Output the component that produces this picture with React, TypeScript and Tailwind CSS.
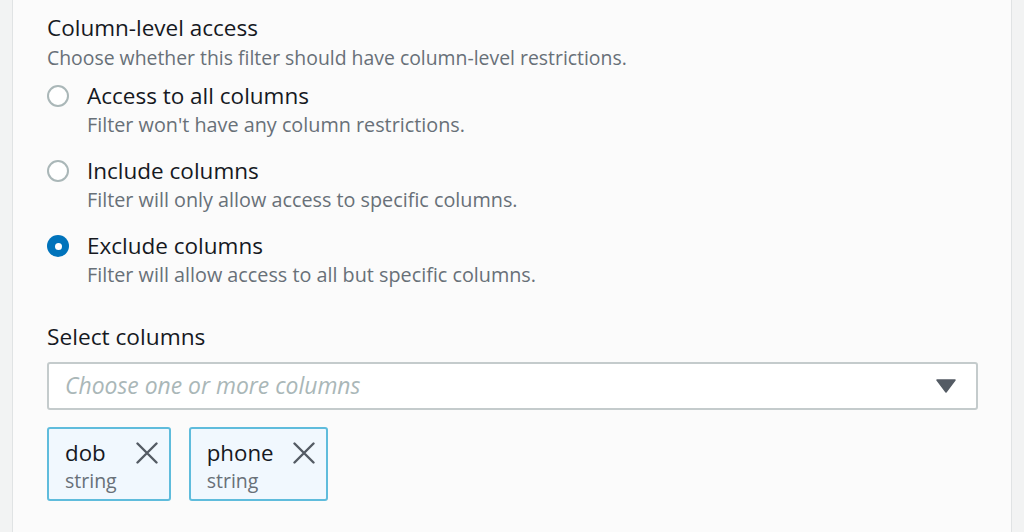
import React from "react";

function Radio({ checked }: { checked?: boolean }) {
  if (checked) {
    return (
      <span className="mt-[4px] flex h-[22px] w-[22px] shrink-0 items-center justify-center rounded-full bg-[#0073bb]">
        <span className="h-[7px] w-[7px] rounded-full bg-white" />
      </span>
    );
  }
  return <span className="mt-[4px] h-[22px] w-[22px] shrink-0 rounded-full border-2 border-[#aab7b8] bg-white" />;
}

function Option({ title, desc, checked }: { title: string; desc: string; checked?: boolean }) {
  return (
    <div className="flex gap-[18px]">
      <Radio checked={checked} />
      <div className="flex flex-col">
        <span className="text-[22.5px] leading-[30px] text-[#16191f]">{title}</span>
        <span className="text-[19.8px] leading-[28px] text-[#687078]">{desc}</span>
      </div>
    </div>
  );
}

function Token({ name }: { name: string }) {
  return (
    <div className="flex items-start gap-[19px] rounded-[3px] border-2 border-[#5fbcdc] bg-[#f1f8fe] pl-[16px] pr-[11px] pt-[9px] pb-[5px]">
      <div className="flex flex-col">
        <span className="text-[22.3px] leading-[30px] text-[#16191f]">{name}</span>
        <span className="text-[19.5px] leading-[26px] text-[#687078]">string</span>
      </div>
      <svg width="22" height="22" viewBox="0 0 22 22" className="mt-[4px]">
        <path d="M1.5 1.5 L20.5 20.5 M20.5 1.5 L1.5 20.5" stroke="#545b64" strokeWidth="2.4" strokeLinecap="round" />
      </svg>
    </div>
  );
}

export default function App() {
  return (
    <div className="flex h-[532px] w-[1024px] bg-[#f2f3f3] px-[12px]" style={{ fontFamily: '"Open Sans", sans-serif' }}>
      <div className="flex flex-1 flex-col border-x border-[#e0e3e4] bg-[#fbfbfb] pl-[34px] pr-[33px] pt-[12px]">
        <h2 className="text-[22.5px] leading-[32px] text-[#16191f]">Column-level access</h2>
        <p className="text-[19.4px] leading-[28px] text-[#687078]">
          Choose whether this filter should have column-level restrictions.
        </p>
        <div className="mt-[9px] flex flex-col gap-[17px]">
          <Option title="Access to all columns" desc="Filter won't have any column restrictions." />
          <Option title="Include columns" desc="Filter will only allow access to specific columns." />
          <Option title="Exclude columns" desc="Filter will allow access to all but specific columns." checked />
        </div>
        <div className="mt-[33px] text-[22.7px] leading-[30px] text-[#16191f]">Select columns</div>
        <div className="mt-[10px] flex h-[48px] items-center justify-between rounded-[3px] border-2 border-[#c4cbcc] bg-white pl-[16px] pr-[20px]">
          <span className="text-[22.9px] italic text-[#aab7b8]">Choose one or more columns</span>
          <svg width="20" height="14" viewBox="0 0 20 14">
            <path d="M1 1 L19 1 L10 13 Z" fill="#545b64" stroke="#545b64" strokeWidth="1.5" strokeLinejoin="round" />
          </svg>
        </div>
        <div className="mt-[17px] flex gap-[18px]">
          <Token name="dob" />
          <Token name="phone" />
        </div>
      </div>
    </div>
  );
}
